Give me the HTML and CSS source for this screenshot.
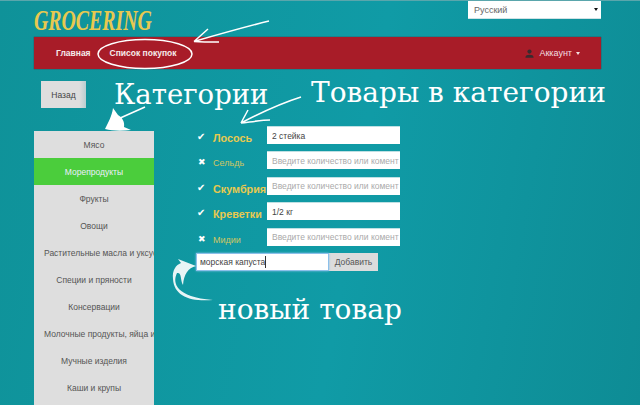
FILE: index.html
```html
<!DOCTYPE html>
<html lang="ru">
<head>
<meta charset="utf-8">
<title>Grocering</title>
<link rel="stylesheet" href="styles.css">
</head>
<body>
<div class="page">
	<header class="top">
		<div class="logo">GROCERING</div>
		<div class="lang"><span>Русский</span><i class="lang-arrow"></i></div>
	</header>
	<nav class="navbar">
		<a class="nav-link">Главная</a>
		<a class="nav-link">Список покупок</a>
		<span class="account">
			<svg class="user-icon" viewBox="0 0 12 12"><circle cx="6" cy="3.4" r="2.8"/><path d="M0.5 11.5 C0.5 8.4 3 7.6 6 7.6 C9 7.6 11.5 8.4 11.5 11.5 Z"/></svg>
			Аккаунт<i class="caret"></i>
		</span>
	</nav>
	<button class="back">Назад</button>
	<div class="main">
		<ul class="cats">
			<li>Мясо</li>
			<li class="active">Морепродукты</li>
			<li>Фрукты</li>
			<li>Овощи</li>
			<li>Растительные масла и уксусы</li>
			<li>Специи и пряности</li>
			<li>Консервации</li>
			<li>Молочные продукты, яйца и</li>
			<li>Мучные изделия</li>
			<li>Каши и крупы</li>
		</ul>
		<div class="goods">
			<div class="row">
				<span class="mark">✔</span><label class="name on">Лосось</label>
				<input class="field" value="2 стейка">
			</div>
			<div class="row">
				<span class="mark no">✖</span><label class="name">Сельдь</label>
				<input class="field" placeholder="Введите количество или комент">
			</div>
			<div class="row">
				<span class="mark">✔</span><label class="name on">Скумбрия</label>
				<input class="field" placeholder="Введите количество или комент">
			</div>
			<div class="row">
				<span class="mark">✔</span><label class="name on">Креветки</label>
				<input class="field" value="1/2 кг">
			</div>
			<div class="row">
				<span class="mark no">✖</span><label class="name">Мидии</label>
				<input class="field" placeholder="Введите количество или комент">
			</div>
			<div class="add">
				<div class="new-wrap">
					<input class="field new" value="морская капуста">
					<i class="text-caret"></i>
				</div>
				<button class="add-btn">Добавить</button>
			</div>
		</div>
	</div>
</div>

<!-- надписи поверх скриншота -->
<div class="note note-cats">Категории</div>
<div class="note note-goods">Товары в категории</div>
<div class="note note-new">новый товар</div>
<svg class="arrows" width="640" height="405" viewBox="0 0 640 405">
	<ellipse cx="145" cy="54" rx="47" ry="14.500" fill="none" stroke="#fff" stroke-width="1.500"/>
	<path d="M269 21 C245 27 220 34 194 41.500 M194 41.500 L208 29 M194 41.500 C203 42 211 42 219 42" fill="none" stroke="#fff" stroke-width="1.500"/>
	<path d="M145 107 C136 111 127 115 118 119" fill="none" stroke="#fff" stroke-width="1.500"/>
	<path d="M113 108 C112 116 108 123 105 129 C112 131 122 131 131 130 L124 127 C125 122 122 117 118 115 Z" fill="#fff"/>
	<path d="M301 97 C282 103 262 112 241 123 M241 123 L248 110 M241 123 C250 122 262 120 270 120" fill="none" stroke="#fff" stroke-width="1.500"/>
	<path d="M178 259 L196 266 C188 268 184 274 183 285 C180 280 182 272 177 273 C172 283 176 297 213 300 C190 302 174 296 173 279 C172 270 176 265 181 263 Z" fill="#fff" opacity="0.9"/>
</svg>
</body>
</html>
```
FILE: styles.css
```css
html, body { margin:0; padding:0; height:405px; overflow:hidden }
body {
	background:linear-gradient(100deg,#0f9299 0%,#109ba6 55%,#0e8c95 100%);
	border-top:1px solid #5aa6ac;
	box-sizing:border-box;
	font-family:"Liberation Sans",sans-serif;
	position:relative;
}
.page { margin-left:34px; width:567px }

.top { display:flex; justify-content:space-between; align-items:flex-start; height:36px }
.logo {
	font:italic bold 30px "Liberation Serif",serif;
	color:#e8c94f;
	margin-top:2px;
	transform:scaleX(0.66);
	transform-origin:left;
}
.lang {
	width:133px; height:18px;
	background:#fff;
	border-bottom:1px solid #cfe3e6;
	display:flex; justify-content:space-between; align-items:center;
	font-size:9px; color:#666;
	box-sizing:border-box;
	padding:0 3px 0 6px;
}
.lang-arrow { border:2px solid transparent; border-top:3px solid #111; border-bottom:0 }

.navbar {
	display:flex; align-items:center;
	height:32px;
	background:#a81c28;
	box-shadow:0 0 1px #5b1118;
	padding:0 21px 0 22px;
}
.nav-link { color:#f6eaea; font-size:8.500px; font-weight:bold; margin-right:19px }
.account { margin-left:auto; color:#f3dfe0; font-size:9px; display:flex; align-items:center }
.user-icon { width:9px; height:9px; fill:#3a2a2e; margin-right:5px }
.caret { border:2.500px solid transparent; border-top:3px solid #f3dfe0; border-bottom:0; margin-left:4px }

.back {
	display:block;
	margin:12px 0 0 7px;
	width:45px; height:27px;
	border:0;
	background:linear-gradient(90deg,#dedede 85%,#b9cdd0);
	font:8.500px "Liberation Sans",sans-serif;
	color:#444;
	padding:0;
}

.main { display:flex; margin-top:23px }
.cats {
	list-style:none; margin:0; padding:0;
	width:120px;
	height:274px;
	background:#dedede;
	flex:none;
}
.cats li {
	height:27px; line-height:29px;
	text-align:center;
	font-size:8.500px;
	color:#555;
	white-space:nowrap;
	overflow:hidden;
	padding:0 10px;
}
.cats li.active { background:#4bcd3c; color:#eef }

.goods { margin-left:43px; margin-top:-5px; width:220px }
.row { display:flex; height:18px; margin-bottom:7.400px }
.mark { width:16px; font:10px/22px "DejaVu Sans",sans-serif; color:#fff; flex:none }
.mark.no { font-size:9px; padding-left:1px; width:15px }
.name { width:54px; font-size:9px; line-height:25px; color:#cfc662; flex:none; white-space:nowrap }
.name.on { font-size:10.800px; line-height:24px; font-weight:bold; color:#e8c94f }
.field {
	width:133px; height:18px;
	border:0;
	border-top:1px solid #bfe0e3;
	box-sizing:border-box;
	padding:0 0 0 5px;
	font:8.500px "Liberation Sans",sans-serif;
	color:#444;
	background:#fff;
	outline:0;
}
.field::placeholder { color:#aaa }
.add { display:flex; margin-left:-1px; margin-top:1.500px }
.new-wrap { position:relative; height:18px }
.new { display:block; width:133px; padding:0 3px; border:1px solid #8cc0ea; box-shadow:0 0 2px #8cc0ea }
.text-caret { position:absolute; left:69px; top:3px; width:1px; height:12px; background:#333 }
.add-btn {
	width:49px; height:18px;
	border:0; padding:0;
	background:#dcdcdc;
	font:8.500px "Liberation Sans",sans-serif;
	color:#555;
}

.note { position:absolute; font-family:"DejaVu Serif",serif; color:#fff; white-space:nowrap }
.note-cats { left:114px; top:77px; font-size:27.500px }
.note-goods { left:311px; top:75px; font-size:28px }
.note-new { left:218px; top:292px; font-size:28px }
.arrows { position:absolute; left:0; top:-1px; pointer-events:none }
```
